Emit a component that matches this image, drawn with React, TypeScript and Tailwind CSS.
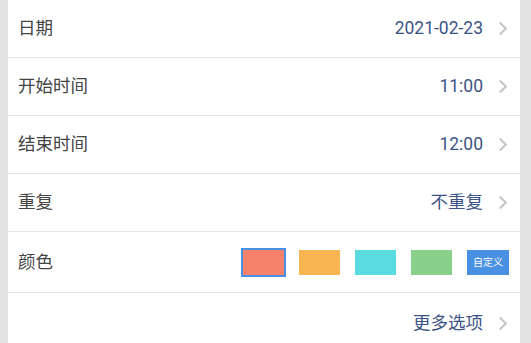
import React from "react";

const font = { fontFamily: '"Roboto", "Noto Sans CJK SC", sans-serif' };

function Chevron() {
  return (
    <svg width="10" height="15" viewBox="0 0 10 15" className="ml-[15px] shrink-0">
      <path d="M1.8 1.5 L7.8 7.5 L1.8 13.5" fill="none" stroke="#c4c4c4" strokeWidth="2" />
    </svg>
  );
}

function Row({ label, value }: { label: string; value: string }) {
  return (
    <div className="flex shrink-0 items-center h-[58px] border-b border-[#e6e6e6] pl-[10px] pr-[12px]">
      <span className="text-[17.5px] text-[#444]">{label}</span>
      <span className="ml-auto text-[17.5px] text-[#3b5485]">{value}</span>
      <Chevron />
    </div>
  );
}

export default function App() {
  return (
    <div className="flex h-[343px] w-[531px] bg-[#e3e3e3] overflow-hidden" style={font}>
      <div className="ml-[8px] w-[512px] bg-white flex flex-col">
        <Row label="日期" value="2021-02-23" />
        <Row label="开始时间" value="11:00" />
        <Row label="结束时间" value="12:00" />
        <Row label="重复" value="不重复" />
        <div className="flex shrink-0 items-center h-[61px] border-b border-[#e6e6e6] pl-[10px] pr-[11px]">
          <span className="text-[17.5px] text-[#444]">颜色</span>
          <div className="ml-auto flex items-center gap-[15px]">
            <div className="w-[41px] h-[25px] bg-[#f7826c] outline-2 outline-[#4a90e2]" />
            <div className="w-[41px] h-[25px] bg-[#f9b552]" />
            <div className="w-[41px] h-[25px] bg-[#5adbe0]" />
            <div className="w-[41px] h-[25px] bg-[#89d18a]" />
            <div className="w-[42px] h-[25px] bg-[#4a90e2] flex items-center justify-center text-[10px] text-white">自定义</div>
          </div>
        </div>
        <div className="flex shrink-0 items-center h-[60px] pl-[10px] pr-[12px]">
          <span className="ml-auto text-[17.5px] text-[#3b5485]">更多选项</span>
          <Chevron />
        </div>
      </div>
    </div>
  );
}
